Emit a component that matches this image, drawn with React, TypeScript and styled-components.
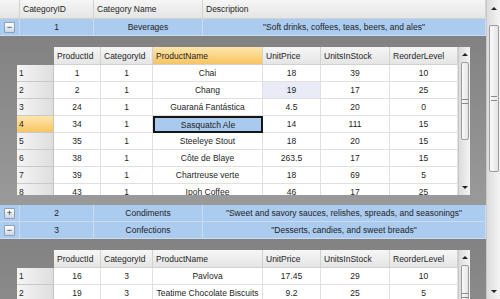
import styled, { createGlobalStyle, css } from "styled-components";

const GlobalStyle = createGlobalStyle`
  body {
    margin: 0;
    font-family: "Liberation Sans", Arial, sans-serif;
    font-size: 8.5px;
    color: #1e1e1e;
    background: #fff;
  }
`;

const COLORS = {
  blue: "#abcbef",
  blueLine: "#c9dcf4",
  headerTop: "#f6f6f6",
  headerBottom: "#e5e5e5",
  headerLine: "#d2d2d2",
  cellLine: "#e0e0e0",
  orangeTop: "#fee6ad",
  orangeBottom: "#f8c462",
};

interface Product {
  id: number;
  cat: number;
  name: string;
  price: number;
  stock: number;
  reorder: number;
}

const beverages: Product[] = [
  { id: 1, cat: 1, name: "Chai", price: 18, stock: 39, reorder: 10 },
  { id: 2, cat: 1, name: "Chang", price: 19, stock: 17, reorder: 25 },
  { id: 24, cat: 1, name: "Guaraná Fantástica", price: 4.5, stock: 20, reorder: 0 },
  { id: 34, cat: 1, name: "Sasquatch Ale", price: 14, stock: 111, reorder: 15 },
  { id: 35, cat: 1, name: "Steeleye Stout", price: 18, stock: 20, reorder: 15 },
  { id: 38, cat: 1, name: "Côte de Blaye", price: 263.5, stock: 17, reorder: 15 },
  { id: 39, cat: 1, name: "Chartreuse verte", price: 18, stock: 69, reorder: 5 },
  { id: 43, cat: 1, name: "Ipoh Coffee", price: 46, stock: 17, reorder: 25 },
];

const confections: Product[] = [
  { id: 16, cat: 3, name: "Pavlova", price: 17.45, stock: 29, reorder: 10 },
  { id: 19, cat: 3, name: "Teatime Chocolate Biscuits", price: 9.2, stock: 25, reorder: 5 },
];

const OUTER_COLS = "20px 74px 109px 1fr";
const INNER_COLS = "37px 47px 52px 110px 58px 69px 68px";

const Page = styled.div`
  width: 500px;
  height: 299px;
  display: flex;
  overflow: hidden;
`;

const Grid = styled.div`
  flex: 1;
  display: flex;
  flex-direction: column;
  overflow: hidden;
`;

const HeaderRow = styled.div`
  display: grid;
  grid-template-columns: ${OUTER_COLS};
  height: 19px;
  flex-shrink: 0;
  background: linear-gradient(${COLORS.headerTop}, ${COLORS.headerBottom});
  border-bottom: 1px solid ${COLORS.headerLine};
  box-sizing: border-box;
`;

const HeaderCell = styled.div`
  display: flex;
  align-items: center;
  padding-left: 3px;
  border-right: 1px solid ${COLORS.headerLine};
  white-space: nowrap;
  overflow: hidden;
`;

const CategoryRow = styled.div`
  display: grid;
  grid-template-columns: ${OUTER_COLS};
  height: 17px;
  flex-shrink: 0;
  background: ${COLORS.blue};
  border-bottom: 1px solid ${COLORS.blueLine};
  box-sizing: border-box;
`;

const CategoryCell = styled.div`
  display: flex;
  align-items: center;
  justify-content: center;
  border-right: 1px solid ${COLORS.blueLine};
  white-space: nowrap;
  overflow: hidden;
`;

const Expander = styled.span`
  width: 9px;
  height: 9px;
  border: 1px solid #8aa0bb;
  border-radius: 1px;
  background: linear-gradient(#ffffff, #cdd6e2);
  display: flex;
  align-items: center;
  justify-content: center;
  font-size: 9px;
  line-height: 1;
  color: #333;
  box-sizing: content-box;
`;

const DetailArea = styled.div`
  flex-shrink: 0;
  display: flex;
  padding: 11px 16px 10px 17px;
  background: linear-gradient(#828282, #9a9a9a);
`;

const Nested = styled.div<{ $height: number }>`
  display: flex;
  height: ${({ $height }) => $height}px;
  overflow: hidden;
`;

const Table = styled.div`
  display: flex;
  flex-direction: column;
`;

const InnerRow = styled.div<{ $header?: boolean }>`
  display: grid;
  grid-template-columns: ${INNER_COLS};
  height: ${({ $header }) => ($header ? 18 : 17)}px;
  flex-shrink: 0;
`;

const InnerHeader = styled.div<{ $active?: boolean; $corner?: boolean }>`
  display: flex;
  align-items: center;
  padding-left: 3px;
  white-space: nowrap;
  overflow: hidden;
  ${({ $corner, $active }) =>
    $corner
      ? css`
          background: transparent;
        `
      : css`
          background: ${$active
            ? `linear-gradient(${COLORS.orangeTop}, ${COLORS.orangeBottom})`
            : `linear-gradient(${COLORS.headerTop}, ${COLORS.headerBottom})`};
          border-right: 1px solid ${COLORS.headerLine};
          border-bottom: 1px solid ${COLORS.headerLine};
        `}
`;

const RowHeader = styled.div<{ $active?: boolean }>`
  display: flex;
  align-items: center;
  padding-left: 2px;
  border-bottom: 1px solid #c9c9c9;
  border-right: 1px solid #c4c4c4;
  background: ${({ $active }) =>
    $active
      ? `linear-gradient(${COLORS.orangeTop}, ${COLORS.orangeBottom})`
      : "linear-gradient(to right, #f5f5f5, #dedede)"};
`;

const DataCell = styled.div<{ $selected?: boolean; $hover?: boolean }>`
  display: flex;
  align-items: center;
  justify-content: center;
  background: #fff;
  border-right: 1px solid ${COLORS.cellLine};
  border-bottom: 1px solid ${COLORS.cellLine};
  white-space: nowrap;
  overflow: hidden;
  ${({ $hover }) =>
    $hover &&
    css`
      background: #e9ecf6;
    `}
  ${({ $selected }) =>
    $selected &&
    css`
      background: #a9caef;
      border: 2px solid #151515;
    `}
`;

const ScrollBar = styled.div<{ $width: number }>`
  width: ${({ $width }) => $width}px;
  flex-shrink: 0;
  display: flex;
  flex-direction: column;
  align-items: center;
  background: linear-gradient(to right, #dcdcdc, #f4f4f4);
  border-left: 1px solid #c8c8c8;
  box-sizing: border-box;
`;

const Arrow = styled.div<{ $dir: "up" | "down"; $h: number }>`
  height: ${({ $h }) => $h}px;
  flex-shrink: 0;
  display: flex;
  align-items: center;
  justify-content: center;
  &::after {
    content: "";
    border-left: 3px solid transparent;
    border-right: 3px solid transparent;
    ${({ $dir }) =>
      $dir === "up"
        ? css`
            border-bottom: 3px solid #222;
          `
        : css`
            border-top: 3px solid #222;
          `}
  }
`;

const Track = styled.div`
  flex: 1;
  width: 100%;
  display: flex;
  flex-direction: column;
  align-items: center;
`;

const Thumb = styled.div<{ $top: number; $height: number }>`
  margin-top: ${({ $top }) => $top}px;
  height: ${({ $height }) => $height}px;
  width: calc(100% - 3px);
  box-sizing: border-box;
  border: 1px solid #9c9c9c;
  border-radius: 2px;
  background: linear-gradient(to right, #fafafa, #e4e4e4);
  display: flex;
  align-items: center;
  justify-content: center;
  &::after {
    content: "";
    width: 6px;
    height: 3px;
    border-top: 1px solid #8a8a8a;
    border-bottom: 1px solid #8a8a8a;
  }
`;

const Spacer = styled.div`
  flex: 1;
`;

interface ProductGridProps {
  rows: Product[];
  height: number;
  selected?: [number, string];
  hover?: [number, string];
  activeRow?: number;
  activeCol?: string;
  thumbHeight: number;
}

const COLS: { key: keyof Product; label: string }[] = [
  { key: "id", label: "ProductId" },
  { key: "cat", label: "CategoryId" },
  { key: "name", label: "ProductName" },
  { key: "price", label: "UnitPrice" },
  { key: "stock", label: "UnitsInStock" },
  { key: "reorder", label: "ReorderLevel" },
];

const ProductGrid = ({
  rows,
  height,
  selected,
  hover,
  activeRow,
  activeCol,
  thumbHeight,
}: ProductGridProps) => (
  <Nested $height={height}>
    <Table>
      <InnerRow $header>
        <InnerHeader $corner />
        {COLS.map((c) => (
          <InnerHeader key={c.key} $active={activeCol === c.key}>
            {c.label}
          </InnerHeader>
        ))}
      </InnerRow>
      {rows.map((r, i) => (
        <InnerRow key={r.id}>
          <RowHeader $active={activeRow === i}>{i + 1}</RowHeader>
          {COLS.map((c) => (
            <DataCell
              key={c.key}
              $selected={selected?.[0] === i && selected?.[1] === c.key}
              $hover={hover?.[0] === i && hover?.[1] === c.key}
            >
              {String(r[c.key])}
            </DataCell>
          ))}
        </InnerRow>
      ))}
    </Table>
    <ScrollBar $width={12}>
      <Arrow $dir="up" $h={15} />
      <Track>
        <Thumb $top={0} $height={thumbHeight} />
        <Spacer />
        <Arrow $dir="down" $h={15} />
      </Track>
    </ScrollBar>
  </Nested>
);

const Category = ({
  id,
  name,
  desc,
  open,
}: {
  id: number;
  name: string;
  desc: string;
  open: boolean;
}) => (
  <CategoryRow>
    <CategoryCell>
      <Expander>{open ? "−" : "+"}</Expander>
    </CategoryCell>
    <CategoryCell>{id}</CategoryCell>
    <CategoryCell>{name}</CategoryCell>
    <CategoryCell>{desc}</CategoryCell>
  </CategoryRow>
);

export default function App() {
  return (
    <>
      <GlobalStyle />
      <Page>
        <Grid>
          <HeaderRow>
            <HeaderCell />
            <HeaderCell>CategoryID</HeaderCell>
            <HeaderCell>Category Name</HeaderCell>
            <HeaderCell>Description</HeaderCell>
          </HeaderRow>
          <Category id={1} name="Beverages" desc={'"Soft drinks, coffees, teas, beers, and ales"'} open />
          <DetailArea>
            <ProductGrid
              rows={beverages}
              height={148}
              activeRow={3}
              activeCol="name"
              selected={[3, "name"]}
              hover={[1, "price"]}
              thumbHeight={78}
            />
          </DetailArea>
          <Category
            id={2}
            name="Condiments"
            desc={'"Sweet and savory sauces, relishes, spreads, and seasonings"'}
            open={false}
          />
          <Category id={3} name="Confections" desc={'"Desserts, candies, and sweet breads"'} open />
          <DetailArea>
            <ProductGrid rows={confections} height={148} thumbHeight={60} />
          </DetailArea>
        </Grid>
        <ScrollBar $width={14}>
          <Arrow $dir="up" $h={17} />
          <Track>
            <Thumb $top={8} $height={147} />
            <Spacer />
            <Arrow $dir="down" $h={16} />
          </Track>
        </ScrollBar>
      </Page>
    </>
  );
}
